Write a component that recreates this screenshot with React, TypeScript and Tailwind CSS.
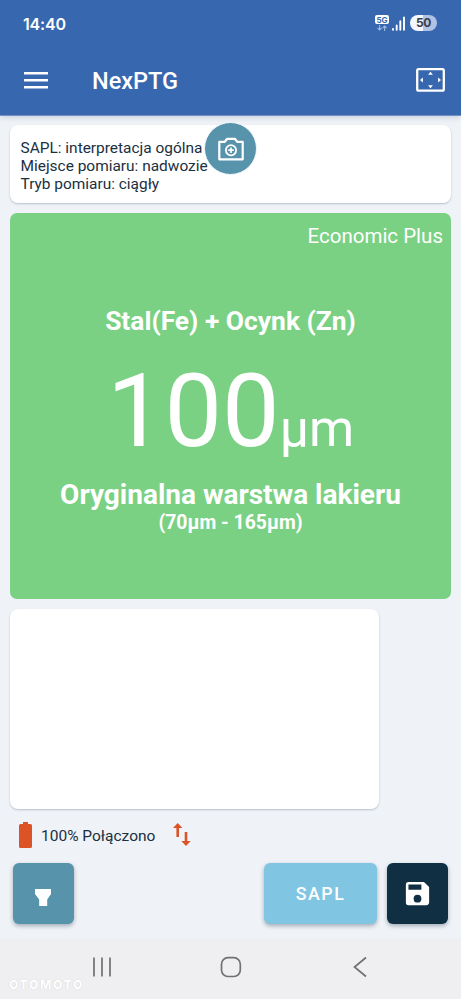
import type { ReactNode } from 'react'

const infoLines = [
  'SAPL: interpretacja ogólna',
  'Miejsce pomiaru: nadwozie',
  'Tryb pomiaru: ciągły'
]

const measurement = {
  profile: 'Economic Plus',
  material: 'Stal(Fe) + Ocynk (Zn)',
  value: 100,
  unit: 'μm',
  verdict: 'Oryginalna warstwa lakieru',
  range: '(70μm - 165μm)'
}

function StatusBar() {
  return (
    <div className="flex h-[46px] items-center justify-between pl-[23px] pr-[24px] text-white">
      <span className="mt-px font-['Inter'] text-[16px] leading-none font-semibold tracking-[-0.2px]">14:40</span>
      <div className="flex items-center">
        <div className="flex flex-col items-center gap-px">
          <span className="flex h-[9px] w-[14px] items-center justify-center rounded-[2px] bg-white font-['Inter'] text-[8px] leading-none font-bold text-[#3767ae]">
            5G
          </span>
          <svg className="h-[6px] w-[10px]" viewBox="0 0 10 6" fill="none" stroke="#9db8e4" strokeWidth="1.1">
            <path d="M2.6 0v5M.6 3l2 2 2-2M7.6 6V1M5.6 3l2-2 2 2" />
          </svg>
        </div>
        <svg className="ml-[3px] h-[15px] w-[13px]" viewBox="0 0 13 15" fill="none" stroke="white" strokeWidth="1.9" strokeLinecap="round">
          <path d="M1 13v.8M4.7 9.5v4.3M8.3 5.3v8.5M12 1.4v12.4" />
        </svg>
        <div className="ml-[5px] flex h-[16px] w-[27px] items-center justify-center rounded-full bg-linear-to-r from-[#f4f7fd] from-50% to-[#b0c3e6] to-50% font-['Inter'] text-[12px] leading-none font-bold tracking-[-0.5px] text-[#3c3f47]">
          50
        </div>
      </div>
    </div>
  )
}

function Header() {
  return (
    <header className="h-[116px] border-b border-[#7490c4] bg-[#3767ae] shadow-[0_2px_5px_rgba(30,50,110,0.16)]">
      <StatusBar />
      <div className="flex h-[68px] items-center pl-[24px] pr-[16px]">
        <button aria-label="Menu">
          <svg className="h-[17px] w-[24px]" viewBox="0 0 24 17" fill="white">
            <path d="M0 0h24v2.6H0zM0 7h24v2.6H0zM0 14h24v2.6H0z" />
          </svg>
        </button>
        <h1 className="mt-[3px] ml-[44px] text-[23.5px] leading-none font-medium text-white">NexPTG</h1>
        <button className="ml-auto" aria-label="Fullscreen">
          <svg className="h-[24px] w-[29px]" viewBox="0 0 29 24" fill="white">
            <rect x="1.2" y="1.2" width="26.6" height="21.4" rx="1.4" fill="none" stroke="white" strokeWidth="2.3" />
            <path d="M14.5 3.8l2.4 2.9h-4.8zM14.5 20.2l2.4-2.9h-4.8zM4 12l2.9-2.4v4.8zM25 12l-2.9-2.4v4.8z" />
          </svg>
        </button>
      </div>
    </header>
  )
}

function Card({ className, children }: { className: string; children?: ReactNode }) {
  return (
    <div className={`rounded-[8px] bg-white shadow-[0_1px_2px_rgba(40,60,90,0.28)] ${className}`}>
      {children}
    </div>
  )
}

export default function App() {
  return (
    <div className="flex h-[999px] w-[461px] flex-col overflow-hidden bg-[#eff3f7] font-['Roboto',sans-serif] text-[#19303f]">
      <Header />

      <main className="flex flex-1 flex-col px-[10px] pt-[9.4px]">
        {/* Session info */}
        <Card className="relative h-[78px] shrink-0 pl-[10.5px] pt-[13.6px]">
          {infoLines.map((line) => (
            <p key={line} className="text-[15.45px] leading-[18px]">{line}</p>
          ))}
          <button
            aria-label="Camera"
            className="absolute -top-[3px] left-[194px] flex h-[53px] w-[53px] items-center justify-center rounded-full border border-[#f3f8fa] bg-[#5893ac]"
          >
            <svg className="h-[24px] w-[26px]" viewBox="0 0 26 24" fill="none" stroke="white" strokeWidth="2.2">
              <path d="M1.3 4.8h5.5l2.4-3h7.6l2.4 3h5.5v17.5H1.3z" strokeLinejoin="round" />
              <circle cx="13" cy="13.2" r="5.1" strokeWidth="1.8" />
              <path d="M13 10.4v5.6M10.2 13.2h5.6" strokeWidth="1.7" />
            </svg>
          </button>
        </Card>

        {/* Measurement */}
        <section className="mt-[10px] flex h-[386px] shrink-0 flex-col items-center rounded-[7px] bg-[#7ad183] text-white">
          <p className="mt-[9.6px] mr-[8px] self-end text-[20.5px] leading-[26px]">{measurement.profile}</p>
          <p className="mt-[56px] text-[26.4px] leading-[32px] font-bold">{measurement.material}</p>
          <div className="mt-[14px] flex items-baseline leading-[120px]">
            <span className="text-[102.5px]">{measurement.value}</span>
            <span className="text-[51.5px]">{measurement.unit}</span>
          </div>
          <p className="-mt-[10.5px] text-[28px] leading-[34px] font-bold">{measurement.verdict}</p>
          <p className="text-[19.4px] leading-[22px] font-bold">{measurement.range}</p>
        </section>

        <Card className="mt-[10px] h-[200px] w-[369px] shrink-0" />

        {/* Device state */}
        <div className="mt-[12.5px] flex h-[26px] items-center pl-[9px]">
          <svg className="h-[26px] w-[13px]" viewBox="0 0 13 26" fill="#dc5328">
            <path d="M4 0h5v2h2.5A1.5 1.5 0 0 1 13 3.5v21a1.5 1.5 0 0 1-1.5 1.5h-10A1.5 1.5 0 0 1 0 24.5v-21A1.5 1.5 0 0 1 1.5 2H4z" />
          </svg>
          <span className="mt-[4px] ml-[9px] text-[15.5px] leading-none">100% Połączono</span>
          <svg className="ml-[18px] h-[23px] w-[18px]" viewBox="0 0 18 23" fill="#dc5328">
            <path d="M4.7 0l4.700 5H6v9H3.400V5H0zM13 23l-4.700-5h3.400V9h2.600v9h3.400z" />
          </svg>
        </div>

        {/* Actions */}
        <div className="mt-[15px] flex h-[61px] px-[3px]">
          <button
            aria-label="Probe"
            className="flex w-[61px] items-center justify-center rounded-[6px] bg-[#5893ac] shadow-[0_2px_4px_rgba(20,40,60,0.35)]"
          >
            <svg className="mt-[9px] mr-px h-[17px] w-[16px]" viewBox="0 0 16 17" fill="white">
              <path d="M0 0h16v5l-3.8 5.500V17H4.200v-6.500L0 5z" />
            </svg>
          </button>
          <button className="ml-auto w-[113px] rounded-[6px] bg-[#80c6e2] pt-[2px] text-[17.7px] font-medium tracking-[1.6px] text-white shadow-[0_2px_4px_rgba(20,40,60,0.35)]">
            SAPL
          </button>
          <button
            aria-label="Save"
            className="ml-[10px] flex w-[61px] items-center justify-center rounded-[6px] bg-[#112f43] shadow-[0_2px_4px_rgba(20,40,60,0.35)]"
          >
            <svg className="h-[31px] w-[31px]" viewBox="0 0 24 24" fill="white">
              <path d="M17 3H5a2 2 0 0 0-2 2v14a2 2 0 0 0 2 2h14c1.1 0 2-.9 2-2V7l-4-4zm-5 16a3 3 0 1 1 0-6 3 3 0 0 1 0 6zm3-10H5V5h10v4z" />
            </svg>
          </button>
        </div>
      </main>

      {/* System navigation */}
      <nav className="relative h-[61px] shrink-0 bg-[#efeff1]">
        <svg className="h-[61px] w-[461px]" viewBox="0 0 461 61" fill="none" stroke="#707175" strokeWidth="1.7">
          <path d="M94 19.5v19M102 19.5v19M110 19.5v19" />
          <rect x="221.5" y="19.7" width="18.8" height="18.8" rx="6.5" />
          <path d="M366 19.5l-11.5 9.5 11.5 9.5" />
        </svg>
        <span className="absolute top-[41px] left-[9px] font-['Inter'] text-[12px] leading-none font-extrabold tracking-[1.7px] text-white [text-shadow:0_0_1px_rgba(0,0,0,0.2)]">
          OTOMOTO
        </span>
      </nav>
    </div>
  )
}
